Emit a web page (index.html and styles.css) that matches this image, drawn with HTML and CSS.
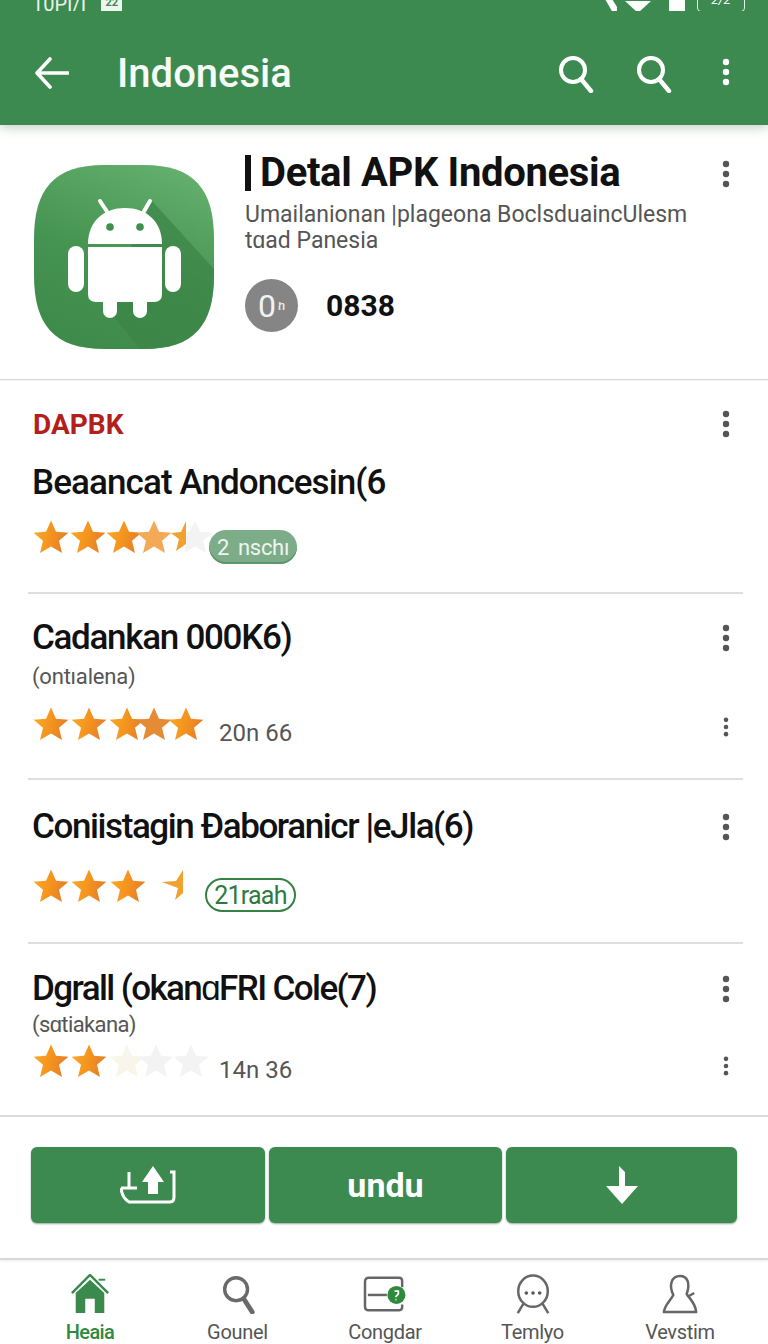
FILE: index.html
```html
<!DOCTYPE html>
<html lang="id">
<head>
<meta charset="utf-8">
<title>Indonesia</title>
<link rel="stylesheet" href="styles.css">
</head>
<body>
<svg class="defs" width="0" height="0" aria-hidden="true">
  <defs>
    <linearGradient id="gold" x1="0" y1="0" x2="1" y2="0.2">
      <stop offset="0" stop-color="#fbab26"/>
      <stop offset="0.55" stop-color="#f4941e"/>
      <stop offset="1" stop-color="#e67f28"/>
    </linearGradient>
    <symbol id="star" overflow="visible" viewBox="-18 -18 36 36">
      <path d="M0-17.5 5-6.2 17.4-5.2 8 2.8 11 15 0 8.4-11 15-8 2.8-17.4-5.2-5-6.2Z"/>
    </symbol>
    <symbol id="kebab" viewBox="0 0 8 28">
      <circle cx="4" cy="4" r="3.2"/><circle cx="4" cy="14" r="3.2"/><circle cx="4" cy="24" r="3.2"/>
    </symbol>
    <symbol id="search" viewBox="0 0 36 38">
      <circle cx="15" cy="15" r="12" fill="none" stroke="currentColor" stroke-width="4"/>
      <path d="M23 24 33 36" fill="none" stroke="currentColor" stroke-width="4.4" stroke-linecap="round"/>
    </symbol>
  </defs>
</svg>
<div class="screen">
  <header class="appbar">
    <div class="status">
      <div class="status-left"><span>10PI/I</span><span class="status-cal">22</span></div>
      <div class="status-right">
        <svg class="st-sig" viewBox="0 0 12 14"><path d="M0 0H7L12 8V14H8Z"/></svg>
        <svg class="st-wifi" viewBox="0 0 26 12"><path d="M0 0H26L13 12Z"/></svg>
        <span class="st-sim"></span>
        <span class="st-batt">2/2</span>
      </div>
    </div>
    <div class="toolbar">
      <svg class="back" viewBox="0 0 34 32"><path d="M15 2 2 16 15 30M3 16H33" fill="none" stroke="#fff" stroke-width="3.6" stroke-linecap="round" stroke-linejoin="round"/></svg>
      <h1 class="bar-title">Indonesia</h1>
      <svg class="tool-search"><use href="#search"/></svg>
      <svg class="tool-search second"><use href="#search"/></svg>
      <svg class="tool-kebab"><use href="#kebab"/></svg>
    </div>
  </header>

  <section class="app">
    <svg class="app-icon" viewBox="0 0 180 184">
      <defs>
        <linearGradient id="tile" x1="0.7" y1="0" x2="0.3" y2="1">
          <stop offset="0" stop-color="#62ae6c"/>
          <stop offset="0.55" stop-color="#469451"/>
          <stop offset="1" stop-color="#3d8a4a"/>
        </linearGradient>
        <clipPath id="tile-clip"><path d="M70 0H110C160 0 180 24 180 74V110C180 160 160 184 110 184H70C20 184 0 160 0 110V74C0 24 20 0 70 0Z"/></clipPath>
      </defs>
      <g clip-path="url(#tile-clip)">
        <rect width="180" height="184" fill="url(#tile)"/>
        <path d="M118 36 180 104V184H106L70 140Z" fill="#3a8446" opacity=".7"/>
      </g>
      <path d="M74 48 66 36M109 48 116 36" stroke="#fff" stroke-width="4" stroke-linecap="round"/>
      <path d="M54 79C54 56 70 43 91 43S128 56 128 79Z" fill="#fff"/>
      <circle cx="76" cy="62" r="3.8" fill="#3f8f4e"/><circle cx="106" cy="62" r="3.8" fill="#3f8f4e"/>
      <path d="M54 82H128V129Q128 137 120 137H62Q54 137 54 129Z" fill="#fff"/>
      <rect x="34" y="81" width="16" height="46" rx="8" fill="#fff"/>
      <rect x="131" y="81" width="16" height="46" rx="8" fill="#fff"/>
      <rect x="69" y="125" width="14" height="28" rx="7" fill="#fff"/>
      <rect x="99" y="125" width="14" height="28" rx="7" fill="#fff"/>
    </svg>
    <div class="app-info">
      <h2 class="app-title"><span class="caret"></span>Detal APK Indonesia</h2>
      <p class="app-desc">Umailanionan |plageona BoclsduaincUlesm<br>tɑad Panesia</p>
      <div class="app-stat">
        <span class="avatar">0<small>ከ</small></span>
        <strong class="stat-num">0838</strong>
      </div>
    </div>
    <svg class="kebab"><use href="#kebab"/></svg>
  </section>

  <section class="list">
    <div class="list-head">
      <h3 class="label">DAPBK</h3>
      <svg class="kebab"><use href="#kebab"/></svg>
    </div>

    <article class="item item-a">
      <div class="item-head"><h4 class="item-title">Beaancat Andoncesin(6</h4></div>
      <div class="meta meta-a">
        <svg class="stars" viewBox="0 0 190 40">
          <use href="#star" class="gold" x="0" y="2" width="36" height="36"/>
          <use href="#star" class="gold" x="37" y="2" width="36" height="36"/>
          <use href="#star" class="gold" x="73" y="2" width="36" height="36"/>
          <use href="#star" class="soft" x="103" y="2" width="36" height="36"/>
          <use href="#star" class="faint" x="144" y="2" width="36" height="36"/>
          <path class="half" d="M153 3V26L143 33 146 21 138 15 148 14Z"/>
        </svg>
        <span class="pill pill-solid"><b>2</b>nschı</span>
      </div>
    </article>

    <article class="item item-b">
      <div class="item-head"><h4 class="item-title">Cadankan 000K6)</h4><svg class="kebab"><use href="#kebab"/></svg></div>
      <p class="item-sub">(ontıalena)</p>
      <div class="meta meta-b">
        <svg class="stars" viewBox="0 0 190 40">
          <use href="#star" class="gold" x="0" y="2" width="36" height="36"/>
          <use href="#star" class="gold" x="38" y="2" width="36" height="36"/>
          <use href="#star" class="gold" x="76" y="2" width="36" height="36"/>
          <use href="#star" class="deep" x="103" y="2" width="36" height="36"/>
          <use href="#star" class="gold" x="135" y="2" width="36" height="36"/>
        </svg>
        <span class="count">20n 66</span>
        <svg class="dots"><use href="#kebab"/></svg>
      </div>
    </article>

    <article class="item item-c">
      <div class="item-head"><h4 class="item-title">Coniistagin Ðaboranicr |eJla(6)</h4><svg class="kebab"><use href="#kebab"/></svg></div>
      <div class="meta meta-c">
        <svg class="stars" viewBox="0 0 190 40">
          <use href="#star" class="gold" x="0" y="2" width="36" height="36"/>
          <use href="#star" class="gold" x="38" y="2" width="36" height="36"/>
          <use href="#star" class="gold" x="77" y="2" width="36" height="36"/>
          <path class="half" d="M150 3V26L142 33 145 21 129 15 143 14Z"/>
        </svg>
        <span class="pill pill-line">21raah</span>
      </div>
    </article>

    <article class="item item-d">
      <div class="item-head"><h4 class="item-title">Dgrall (okanɑFRI Cole(7)</h4><svg class="kebab"><use href="#kebab"/></svg></div>
      <p class="item-sub">(sɑtiakana)</p>
      <div class="meta meta-d">
        <svg class="stars" viewBox="0 0 190 40">
          <use href="#star" class="gold" x="0" y="2" width="36" height="36"/>
          <use href="#star" class="gold" x="38" y="2" width="36" height="36"/>
          <use href="#star" class="faint warm" x="76" y="2" width="36" height="36"/>
          <use href="#star" class="faint" x="105" y="2" width="36" height="36"/>
          <use href="#star" class="faint" x="140" y="2" width="36" height="36"/>
        </svg>
        <span class="count">14n 36</span>
        <svg class="dots"><use href="#kebab"/></svg>
      </div>
    </article>
  </section>

  <section class="actions">
    <button class="action">
      <svg class="act-tray" viewBox="0 0 56 38"><path d="M9 6V21M1 22H17M1 22Q2 32 9 36H50Q54 36 54 31V6H50" fill="none" stroke="#fff" stroke-width="3"/><path d="M33 0 44 16H38V28H28V16H22Z" fill="#fff"/></svg>
    </button>
    <button class="action action-text">undu</button>
    <button class="action">
      <svg class="act-down" viewBox="0 0 34 38"><path d="M14 0 20 6V20H33L17 38 1 20H14Z" fill="#fff"/></svg>
    </button>
  </section>

  <nav class="nav">
    <a class="nav-item active">
      <svg class="nav-icon" viewBox="0 0 40 42"><path d="M1 20 20 1 39 20" fill="none" stroke="#3a8a4e" stroke-width="2.6"/><path d="M29 5H36V7H29Z" fill="#3a8a4e"/><path d="M5 20 20 6 35 20V41H25V26H15V41H5Z" fill="#3a8a4e"/></svg>
      <span>Heaia</span>
    </a>
    <a class="nav-item">
      <svg class="nav-icon" viewBox="0 0 40 42"><circle cx="18" cy="16" r="12" fill="none" stroke="#6a6a6a" stroke-width="3.6"/><path d="M26 26 35 40" stroke="#6a6a6a" stroke-width="5" stroke-linecap="round"/></svg>
      <span>Gounel</span>
    </a>
    <a class="nav-item">
      <svg class="nav-icon wide" viewBox="0 0 46 42"><path d="M41 14V7Q41 4 38 4H6Q2 4 2 8V34Q2 38 6 38H38Q41 38 41 35V32" fill="none" stroke="#666" stroke-width="2.6"/><path d="M5 22H25" stroke="#666" stroke-width="2.6"/><circle cx="35" cy="22" r="9.5" fill="#2f8a3e"/><path d="M33 18H37V21L34 24M34 27H35" fill="none" stroke="#fff" stroke-width="1.8"/></svg>
      <span>Congdar</span>
    </a>
    <a class="nav-item">
      <svg class="nav-icon" viewBox="0 0 40 42"><ellipse cx="20" cy="18" rx="15.5" ry="16.5" fill="none" stroke="#666" stroke-width="2.6"/><circle cx="13" cy="20" r="1.9" fill="#555"/><circle cx="20" cy="20" r="1.9" fill="#555"/><circle cx="27" cy="20" r="1.9" fill="#555"/><path d="M10 31 4 41M30 31 36 41" fill="none" stroke="#666" stroke-width="2.6"/></svg>
      <span>Temlyo</span>
    </a>
    <a class="nav-item">
      <svg class="nav-icon" viewBox="0 0 40 42"><path d="M13 22C8 12 11 2 20 2 28 2 31 10 27 21 30 26 36 30 37 40H3C4 32 10 28 13 22Z" fill="none" stroke="#666" stroke-width="2.6" stroke-linejoin="round"/><path d="M28 24 35 20" stroke="#666" stroke-width="2.4"/></svg>
      <span>Vevstim</span>
    </a>
  </nav>
</div>
</body>
</html>
```

FILE: styles.css
```css
* { box-sizing: border-box; }
html, body { margin: 0; padding: 0; background: #fff; }
body { width: 768px; height: 1344px; overflow: hidden; font-family: Roboto, "Liberation Sans", sans-serif; color: #111; }
h1, h2, h3, h4, p { margin: 0; font-weight: inherit; }
.defs { position: absolute; }
.screen { width: 768px; height: 1344px; display: flex; flex-direction: column; }

.appbar { height: 125px; background: #3d8a50; color: #fff; box-shadow: 0 3px 10px rgba(60,90,60,.28); position: relative; flex: none; }
.status { height: 11px; padding: 0 23px 0 32px; display: flex; justify-content: space-between; align-items: flex-end; overflow: hidden; }
.status-left { display: flex; gap: 15px; align-items: flex-end; font-size: 20px; line-height: 20px; color: #e9f3eb; }
.status-left > span:first-child { margin-bottom: -3px; }
.status-cal { width: 21px; height: 14px; background: #eef6ef; color: #3d8a50; font-size: 11px; line-height: 12px; font-weight: 700; text-align: center; }
.status-right { display: flex; align-items: flex-end; }
.st-sig { width: 12px; height: 14px; fill: #fff; margin-bottom: -2px; }
.st-wifi { width: 26px; height: 12px; fill: #fff; margin: 0 0 -2px 8px; }
.st-sim { width: 16px; height: 19px; background: #fff; border-radius: 1px; margin: 0 0 -2px 18px; }
.st-batt { width: 48px; height: 20px; border: 1.5px solid #e7f2e9; border-radius: 4px; margin: 0 0 -1px 12px; font-size: 13px; line-height: 13px; font-style: italic; text-align: center; }

.toolbar { height: 114px; padding: 0 38px 2px 35px; display: flex; align-items: flex-start; color: #fff; }
.back { width: 34px; height: 32px; margin-top: 46px; flex: none; }
.bar-title { font-size: 40px; line-height: 44px; font-weight: 500; margin: 41px 0 0 48px; flex: 1; color: #f6fbf6; }
.tool-search { width: 36px; height: 38px; margin-top: 44px; }
.tool-search.second { margin-left: 42px; }
.tool-kebab { width: 8px; height: 28px; margin: 47px 0 0 50px; fill: #fff; }

.app { height: 255px; flex: none; display: flex; align-items: flex-start; padding: 40px 38px 0 34px; border-bottom: 1px solid #d6d6d6; box-shadow: 0 1px 1px rgba(0,0,0,.04); }
.app-icon { width: 180px; height: 184px; flex: none; }
.app-info { margin-left: 31px; flex: 1; }
.app-title { font-size: 40px; line-height: 42px; font-weight: 700; color: #111; display: flex; align-items: center; white-space: nowrap; margin-top: -13px; letter-spacing: -.35px; }
.caret { width: 6px; height: 36px; background: #111; margin-right: 9px; }
.app-desc { font-size: 23px; line-height: 26px; color: #555; margin-top: 8px; white-space: nowrap; }
.app-stat { display: flex; align-items: center; margin-top: 25px; }
.avatar { width: 53px; height: 53px; border-radius: 50%; background: #858585; color: #f2f2f2; font-size: 32px; display: flex; align-items: center; justify-content: center; }
.avatar small { font-size: 13px; margin-left: 2px; }
.stat-num { font-size: 30px; font-weight: 700; margin-left: 28px; color: #111; }
.kebab { width: 8px; height: 28px; fill: #555; flex: none; }
.app .kebab { margin-top: -5px; }

.list { flex: none; height: 737px; }
.list-head { height: 80px; padding: 30px 38px 0 33px; display: flex; justify-content: space-between; align-items: flex-start; }
.label { font-size: 28px; line-height: 30px; font-weight: 700; color: #b3201c; }
.item { margin: 0 25px 0 28px; border-bottom: 2px solid #dedede; padding: 0 0 0 4px; }
.item-a { height: 134px; }
.item-b { height: 186px; padding-top: 21px; }
.item-c { height: 164px; padding-top: 24px; }
.item-d { height: 173px; margin: 0; padding: 22px 38px 0 32px; }
.item-head { display: flex; justify-content: space-between; align-items: center; height: 46px; }
.item-title { font-size: 35px; line-height: 46px; font-weight: 500; color: #111; white-space: nowrap; }
.item-a .item-title { letter-spacing: -.9px; }
.item-b .item-title { letter-spacing: -1.3px; }
.item-c .item-title { letter-spacing: -1.4px; }
.item-d .item-title { letter-spacing: -1.6px; }
.item-b .item-head, .item-c .item-head { padding-right: 13px; }
.item-sub { font-size: 22px; line-height: 28px; color: #555; margin-top: 2px; letter-spacing: -.2px; }
.item-d .item-sub { margin-top: -1px; letter-spacing: -.6px; }
.meta { display: flex; align-items: center; }
.meta-a { margin-top: 6px; }
.meta-b { margin-top: 12px; padding-right: 13px; }
.meta-c { margin-top: 12px; }
.meta-d { margin-top: 1px; }
.stars { width: 190px; height: 40px; flex: none; margin-left: 1px; }
.gold { fill: url(#gold); }
.soft { fill: #f3a955; }
.deep { fill: #e58a35; }
.half { fill: #f0a12e; }
.faint { fill: #f2f3f2; }
.faint.warm { fill: #faf5ea; }
.pill { border-radius: 18px; height: 34px; display: inline-flex; align-items: center; justify-content: center; }
.pill-solid { width: 88px; margin: 18px 0 0 -14px; background: #7dac89; color: #eef5ef; box-shadow: inset 0 -2px 0 #5c9470; font-size: 22px; letter-spacing: -.3px; }
.pill-solid b { font-weight: 400; margin-right: 9px; }
.pill-line { width: 91px; margin: 16px 0 0 -18px; border: 2px solid #358043; color: #2f7a42; font-size: 25px; letter-spacing: -.8px; }
.count { font-size: 24px; color: #555; margin-left: -4px; flex: 1; padding-top: 16px; }
.dots { width: 8px; height: 20px; fill: #555; flex: none; margin-top: 4px; }
.meta-d .dots { margin-top: 8px; }

.actions { flex: none; height: 143px; padding: 30px 32px 35px 31px; display: grid; grid-template-columns: 234px 233px 231px; gap: 4px; border-bottom: 2px solid #d8d8d8; box-shadow: 0 1px 3px rgba(0,0,0,.08); }
.action { border: 0; padding: 0; border-radius: 6px; background: #3c8a50; color: #fff; display: flex; align-items: center; justify-content: center; font: 700 34px Roboto, sans-serif; box-shadow: 0 1px 2px rgba(40,90,50,.5); }
.act-tray { width: 56px; height: 38px; }
.act-down { width: 34px; height: 38px; }

.nav { flex: none; height: 84px; padding: 14px 38px 0 40px; display: flex; justify-content: space-between; }
.nav-item { width: 100px; display: flex; flex-direction: column; align-items: center; color: #555; font-size: 20px; line-height: 24px; letter-spacing: -.3px; }
.nav-item.active { color: #2f8a3e; font-weight: 500; letter-spacing: -.6px; }
.nav-icon { width: 40px; height: 42px; }
.nav-icon.wide { width: 46px; }
.nav-item span { margin-top: 6px; white-space: nowrap; }
```
